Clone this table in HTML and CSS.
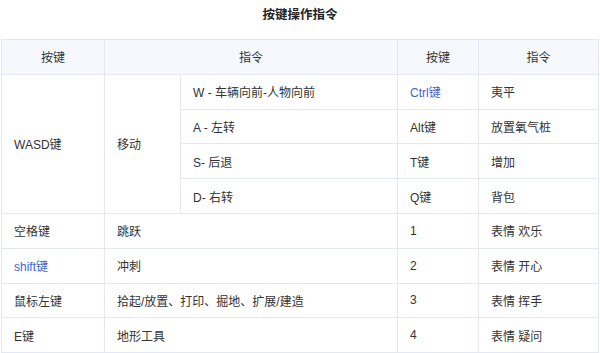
FILE: index.html
```html
<!DOCTYPE html>
<html lang="zh">
<head>
<meta charset="utf-8">
<title>按键操作指令</title>
<link rel="stylesheet" href="styles.css">
</head>
<body>
<div class="title">按键操作指令</div>
<table class="keys">
  <colgroup>
    <col class="c1"><col class="c2"><col class="c3"><col class="c4"><col class="c5">
  </colgroup>
  <thead>
    <tr><th>按键</th><th colspan="2">指令</th><th>按键</th><th>指令</th></tr>
  </thead>
  <tbody>
    <tr><td rowspan="4">WASD键</td><td rowspan="4">移动</td><td>W - 车辆向前-人物向前</td><td><span class="link">Ctrl键</span></td><td>夷平</td></tr>
    <tr><td>A - 左转</td><td>Alt键</td><td>放置氧气桩</td></tr>
    <tr><td>S- 后退</td><td>T键</td><td>增加</td></tr>
    <tr><td>D- 右转</td><td>Q键</td><td>背包</td></tr>
    <tr><td>空格键</td><td colspan="2">跳跃</td><td>1</td><td>表情 欢乐</td></tr>
    <tr><td><span class="link">shift键</span></td><td colspan="2">冲刺</td><td>2</td><td>表情 开心</td></tr>
    <tr><td>鼠标左键</td><td colspan="2">拾起/放置、打印、掘地、扩展/建造</td><td>3</td><td>表情 挥手</td></tr>
    <tr><td>E键</td><td colspan="2">地形工具</td><td>4</td><td>表情 疑问</td></tr>
  </tbody>
</table>
</body>
</html>
```

FILE: styles.css
```css
html, body {
  margin: 0;
  padding: 0;
  background: #ffffff;
}
body {
  font-family: "Liberation Sans", "Noto Sans CJK SC", sans-serif;
  font-size: 12px;
  color: #333333;
}
.title {
  height: 39px;
  line-height: 31px;
  text-align: center;
  font-weight: bold;
  font-size: 12.5px;
  color: #222222;
}
.keys {
  margin-left: 1px;
  width: 597px;
  border-collapse: collapse;
  table-layout: fixed;
  border: 1px solid #e4e8f4;
}
.c1 { width: 103px; }
.c2 { width: 76px; }
.c3 { width: 217px; }
.c4 { width: 81px; }
.c5 { width: 120px; }
.keys th,
.keys td {
  border: 1px solid #e4e8f4;
  height: 33.8px;
  padding: 0 12px;
  vertical-align: middle;
  white-space: nowrap;
}
.keys th {
  background: #f6f8fd;
  font-weight: normal;
  text-align: center;
  color: #333333;
}
.keys td {
  text-align: left;
}
.link {
  color: #3e63d2;
}
```
